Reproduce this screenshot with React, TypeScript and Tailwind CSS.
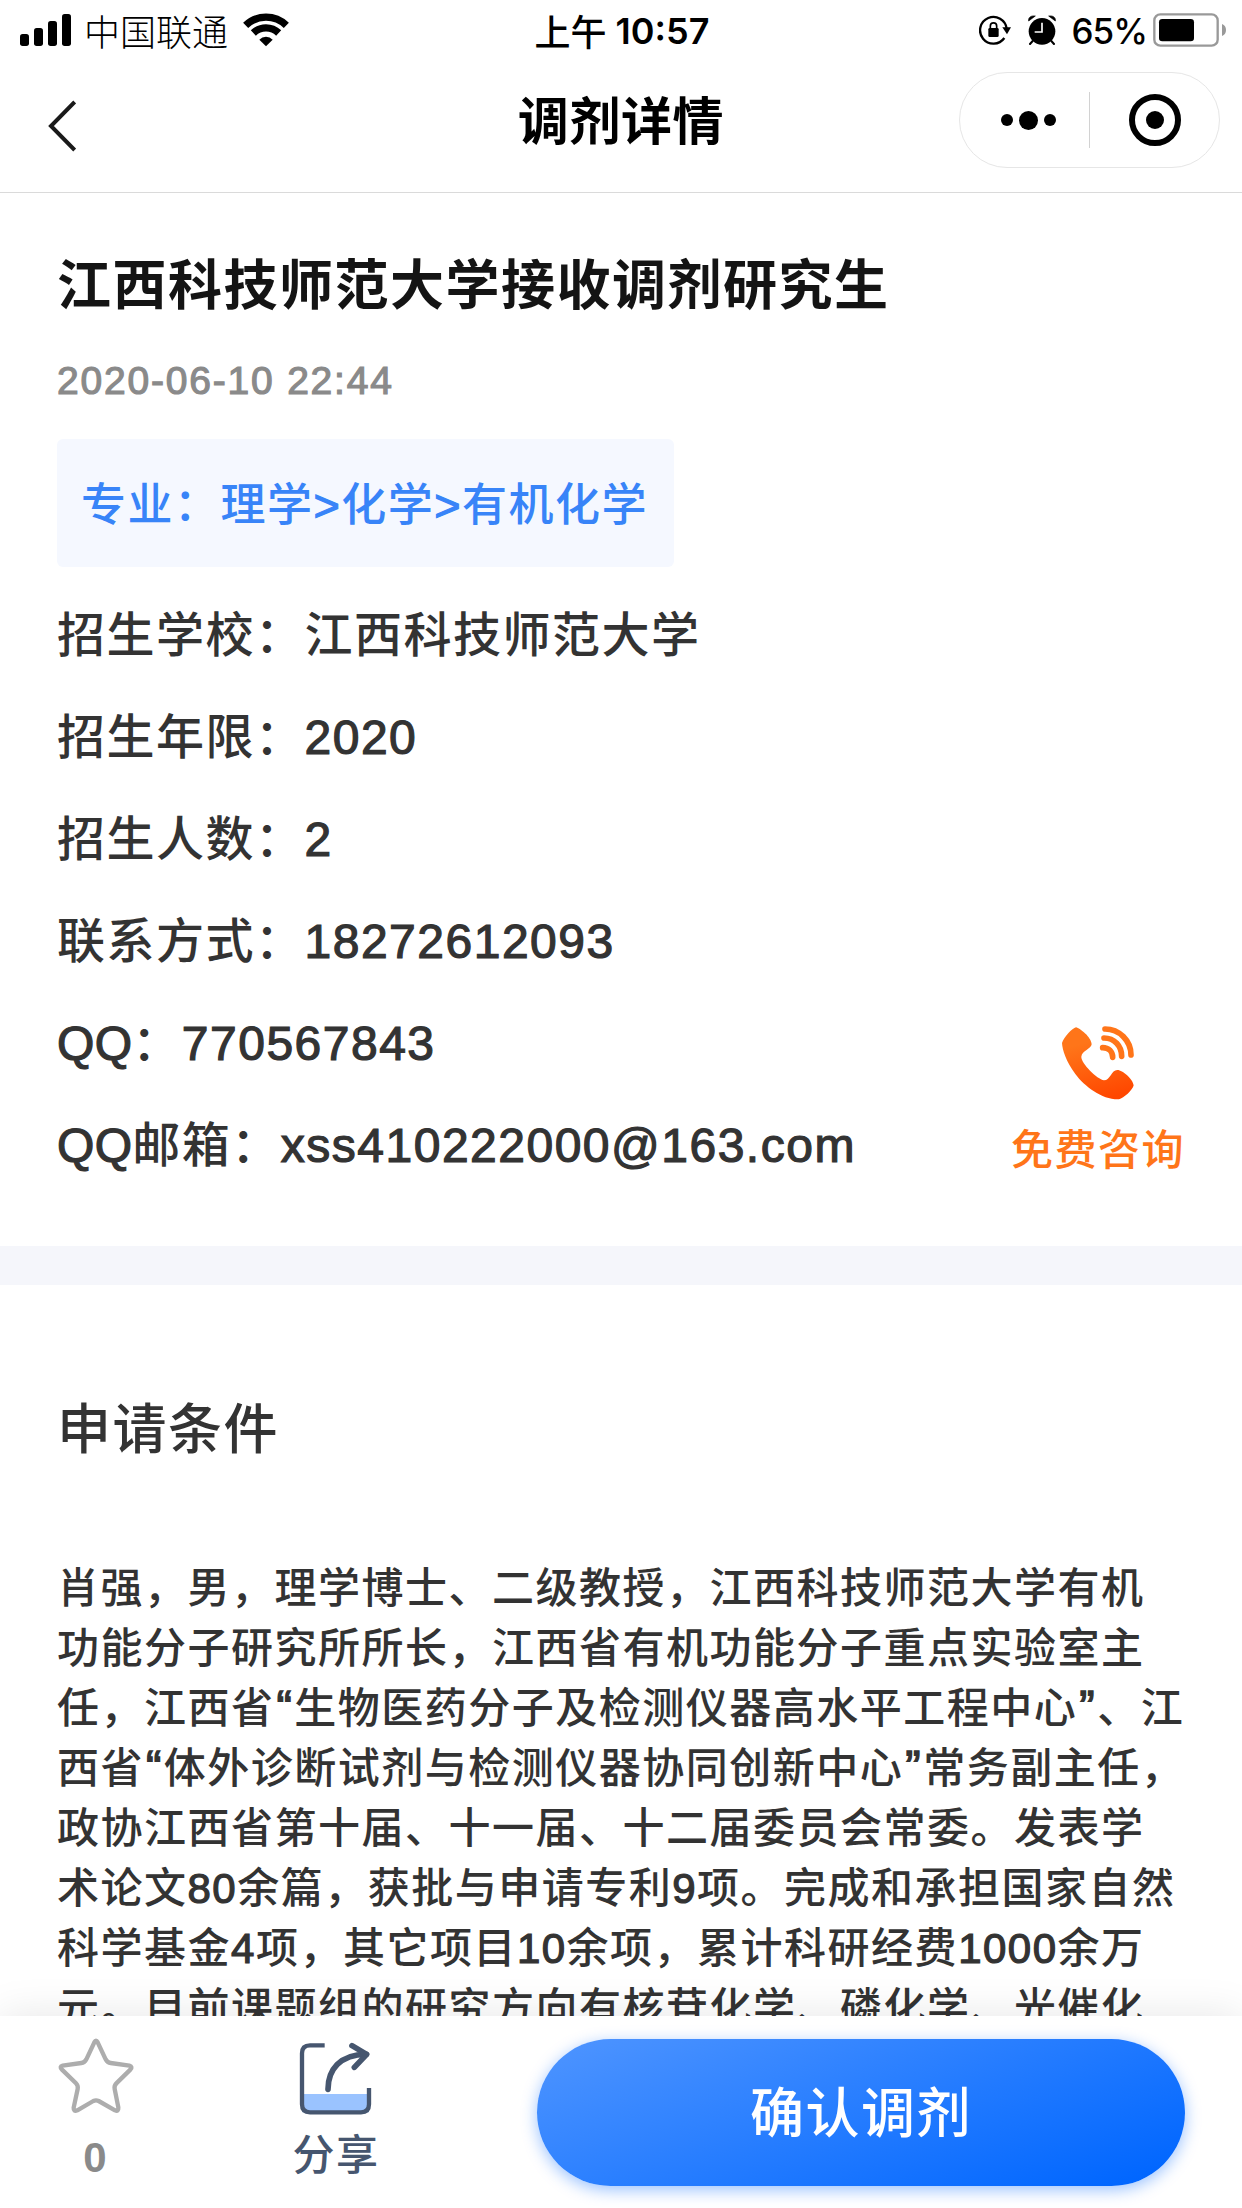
import React from 'react';

interface InfoItem {
  label: string;
  value: string;
}

const infoItems: InfoItem[] = [
  { label: '招生学校', value: '江西科技师范大学' },
  { label: '招生年限', value: '2020' },
  { label: '招生人数', value: '2' },
  { label: '联系方式', value: '18272612093' },
  { label: 'QQ', value: '770567843' },
  { label: 'QQ邮箱', value: 'xss410222000@163.com' }
];

const conditionLines: string[] = [
  '肖强，男，理学博士、二级教授，江西科技师范大学有机',
  '功能分子研究所所长，江西省有机功能分子重点实验室主',
  '任，江西省“生物医药分子及检测仪器高水平工程中心”、江',
  '西省“体外诊断试剂与检测仪器协同创新中心”常务副主任，',
  '政协江西省第十届、十一届、十二届委员会常委。发表学',
  '术论文80余篇，获批与申请专利9项。完成和承担国家自然',
  '科学基金4项，其它项目10余项，累计科研经费1000余万',
  '元。目前课题组的研究方向有核苷化学、磷化学、光催化'
];

// Latin runs get a thin stroke so they carry the same weight as the medium CJK glyphs
const MixedText: React.FC<{ text: string }> = ({ text }) => (
  <>
    {text.split(/([“”]|[\x20-\x7e]+)/).map((part, i) => {
      if (/^[“”]$/.test(part)) {
        return <span key={i} className="pl-[2px] text-[46px] leading-none tracking-[2.5px] [-webkit-text-stroke:1.4px_currentColor]">{part}</span>;
      }
      if (part === 'QQ') {
        return <span key={i} className="tracking-[0.3px] [-webkit-text-stroke:1.2px_currentColor]">{part}</span>;
      }
      if (/^[\x20-\x7e]+$/.test(part)) {
        return <span key={i} className="[-webkit-text-stroke:1.2px_currentColor]">{part}</span>;
      }
      return part;
    })}
  </>
);

const StatusBar: React.FC = () => (
  <div className="grid h-16 grid-cols-[1fr_auto_1fr] items-center pl-5 pr-[16px] text-[36px] leading-none tracking-normal text-black">
    <div className="flex items-center">
      <svg className="-mt-1 h-8 w-[51px]" viewBox="60 42 153 96">
        <rect x="60" y="102" width="27" height="36" rx="8" />
        <rect x="102" y="84" width="27" height="54" rx="8" />
        <rect x="144" y="63" width="27" height="75" rx="8" />
        <rect x="186" y="42" width="27" height="96" rx="8" />
      </svg>
      <span className="-mt-[5px] ml-[13px] font-['Noto_Sans_CJK_SC',sans-serif] font-light">中国联通</span>
      <svg className="-mt-[5px] ml-[15px] h-[34px] w-[46px]" viewBox="729 38 138 102">
        <path d="M737 75A88 88 0 0 1 859 75" fill="none" stroke="#000" strokeWidth="22" />
        <path d="M760 98A55 55 0 0 1 836 98" fill="none" stroke="#000" strokeWidth="22" />
        <path d="M798 138L778 118A28 28 0 0 1 818 118Z" />
      </svg>
    </div>
    <div className="-mt-[3px] flex items-center gap-[9px] pr-[2px]">
      <span className="-mt-px font-['Noto_Sans_CJK_SC',sans-serif] font-medium">上午</span>
      <span className="font-['Inter',sans-serif] font-semibold">10:57</span>
    </div>
    <div className="-mt-1 flex items-center justify-end">
      <svg className="h-8 w-8" viewBox="117 46 96 96">
        <path d="M193 118A40 40 0 1 1 200 90" fill="none" stroke="#000" strokeWidth="7" />
        <path d="M187 86H213L201 107Z" />
        <rect x="145" y="88" width="31" height="27" rx="4" />
        <path d="M151 90V82A9.500 9.500 0 0 1 170 82V90" fill="none" stroke="#000" strokeWidth="5" />
      </svg>
      <svg className="ml-[17px] h-[30px] w-7" viewBox="266 46 84 90">
        <circle cx="308" cy="95" r="40" />
        <path d="M268 64C266 54 274 47 288 49ZM348 64C350 54 342 47 328 49Z" stroke="#000" strokeWidth="2" />
        <path d="M280 124L272 133M336 124L344 133" stroke="#000" strokeWidth="6" strokeLinecap="round" />
        <path d="M308 69V97H286" fill="none" stroke="#fff" strokeWidth="5" />
      </svg>
      <span className="ml-4 mt-[2px] font-['Inter',sans-serif] text-[35px] tracking-[-1px]">65%</span>
      <svg className="ml-[6px] h-[34px] w-[73px]" viewBox="639 39 219 102">
        <rect x="643" y="43" width="190" height="94" rx="18" fill="none" stroke="#999" strokeWidth="7" />
        <rect x="657" y="57" width="105" height="67" rx="10" />
        <path d="M846 72Q858 77 858 90T846 108Z" fill="#999" />
      </svg>
    </div>
  </div>
);

const NavBar: React.FC = () => (
  <div className="grid h-[129px] grid-cols-[1fr_auto_1fr] items-start border-b border-[#dadada] px-[22px]">
    <svg className="ml-[26px] mt-9 h-[52px] w-7" viewBox="144 300 84 156">
      <path d="M224 306L153 378L224 450" fill="none" stroke="#1a1a1a" strokeWidth="12" />
    </svg>
    <h1 className="mt-[26px] text-[51px] font-bold leading-[66px] tracking-[0.6px] text-black">调剂详情</h1>
    <div className="mt-2 flex h-24 w-[261px] items-center justify-self-end rounded-full border border-[#e6e6e6]">
      <div className="flex w-[129px] items-center justify-center gap-[6px] pl-[7px]">
        <span className="h-3 w-3 rounded-full bg-black" />
        <span className="h-[19px] w-[19px] rounded-full bg-black" />
        <span className="h-3 w-3 rounded-full bg-black" />
      </div>
      <div className="h-14 w-px bg-[#d2d2d2]" />
      <div className="flex flex-1 justify-center">
        <div className="flex h-[52px] w-[52px] items-center justify-center rounded-full border-[6px] border-black">
          <span className="h-[18px] w-[18px] rounded-full bg-black" />
        </div>
      </div>
    </div>
  </div>
);

const ConsultButton: React.FC = () => (
  <button className="flex flex-col items-center self-end pb-4 text-[#ff7519]">
    <svg className="h-[74px] w-[74px]" viewBox="305 80 222 222">
      <defs>
        <linearGradient id="phoneGradient" x1="0.3" y1="0" x2="0.6" y2="1">
          <stop offset="20%" stopColor="#ff7519" />
          <stop offset="100%" stopColor="#ff4700" />
        </linearGradient>
      </defs>
      <path
        d="M350 84C362 87 396 113 397 135C396 149 368 154 366 172C364 190 413 240 434 243C453 243 456 212 474 212C488 211 521 239 523 258C520 272 493 297 479 300C430 302 376 262 348 224C320 186 309 152 308 131C313 114 339 86 350 84Z"
        fill="url(#phoneGradient)"
      />
      <g fill="none" stroke="#ff7519" strokeWidth="17" strokeLinecap="round">
        <path d="M437 89C480 89 515 124 515 167" />
        <path d="M434 116C465 116 487 140 487 171" />
        <path d="M430 145C448 145 460 157 460 174" />
      </g>
    </svg>
    <span className="mt-[21px] text-[42px] leading-[60px]">免费咨询</span>
  </button>
);

const BottomBar: React.FC = () => (
  <div className="relative flex h-48 shrink-0 bg-white shadow-[0_0_40px_rgba(0,0,0,0.1)]">
    <button className="flex w-[192px] flex-col items-center pt-[21px]">
      <svg className="h-[78px] w-[78px]" viewBox="171 111 234 234">
        <path
          d="M283 127Q288 117 293 127L317 178Q322 188 332 189L388 197Q399 200 391 209L349 250Q342 257 344 267L355 322Q356 336 345 331L296 303Q288 299 280 303L232 331Q220 336 221 323L233 267Q235 257 228 250L186 209Q177 200 188 197L244 189Q254 188 259 178Z"
          fill="none"
          stroke="#adadad"
          strokeWidth="13"
          strokeLinejoin="round"
        />
      </svg>
      <span className="mr-[2px] mt-[18px] text-[42px] font-bold leading-[50px] tracking-normal text-[#8a8a8a]">0</span>
    </button>
    <button className="flex w-[288px] flex-col items-center pt-[26px] text-[#46566f]">
      <svg className="h-[74px] w-[74px]" viewBox="898 126 222 222">
        <path d="M908 282H1108V337H908Z" fill="#9ac3ff" />
        <g fill="none" stroke="#46566f">
          <path d="M975 136H931Q907 136 907 160V313Q907 337 931 337H1084Q1108 337 1108 313V264" strokeWidth="13" />
          <path d="M985 268C985 210 1020 163 1100 163" strokeWidth="17" strokeLinecap="round" />
          <path d="M1057 137L1101 163L1064 202" strokeWidth="17" strokeLinecap="round" strokeLinejoin="round" />
        </g>
      </svg>
      <span className="mt-[10px] text-[42px] leading-[60px]">分享</span>
    </button>
    <button className="ml-[57px] mt-[23px] h-[147px] w-[648px] rounded-full bg-[linear-gradient(160deg,#4f95ff_0%,#0066ff_95%)] pt-[3px] text-[54px] font-medium text-white shadow-[0_4px_16px_rgba(0,102,255,0.4)]">
      确认调剂
    </button>
  </div>
);

export default function App() {
  return (
    <div className="flex h-[2208px] w-[1242px] flex-col overflow-hidden whitespace-nowrap bg-white font-['Liberation_Sans','Noto_Sans_CJK_SC',sans-serif] font-medium tracking-[1.5px] text-[#333]">
      <StatusBar />
      <NavBar />

      <div className="min-h-0 flex-1 overflow-hidden">
        {/* Summary */}
        <section className="px-[57px] pb-[49px] pt-[55px]">
          <h2 className="text-[54px] font-bold leading-[76px] text-[#141414]">江西科技师范大学接收调剂研究生</h2>
          <p className="mt-[30px] text-[39px] leading-[54px] tracking-[1.8px] text-[#8a8a8a]">
            <MixedText text="2020-06-10 22:44" />
          </p>
          <div className="mt-[31px] flex h-[128px] w-[617px] items-center rounded-md bg-[#f5f8ff] px-6 pt-[5px] text-[45px] text-[#3884f8]">
            <span><MixedText text="专业：理学>化学>有机化学" /></span>
          </div>
          <div className="mt-[18px] flex justify-between">
            <ul className="text-[48px] leading-[102px]">
              {infoItems.map(item => (
                <li key={item.label}>
                  <MixedText text={`${item.label}：${item.value}`} />
                </li>
              ))}
            </ul>
            <ConsultButton />
          </div>
        </section>

        <div className="h-[39px] bg-[#f5f6fb]" />

        {/* Conditions */}
        <section className="px-[57px] pt-[107px]">
          <h3 className="text-[54px] leading-[76px]">申请条件</h3>
          <div className="mt-[91px] text-[42px] leading-[60px]">
            {conditionLines.map(line => (
              <p key={line}>
                <MixedText text={line} />
              </p>
            ))}
          </div>
        </section>
      </div>

      <BottomBar />
    </div>
  );
}
